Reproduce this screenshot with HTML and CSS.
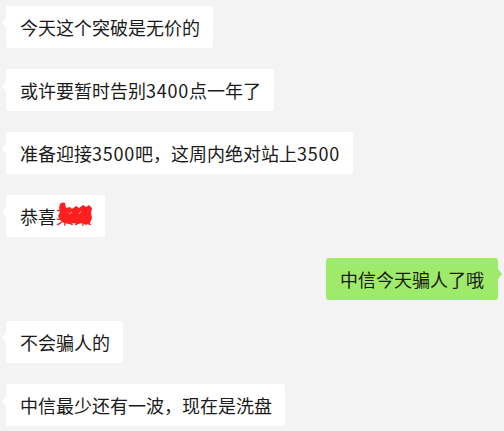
FILE: index.html
```html
<!DOCTYPE html>
<html lang="zh-CN">
<head>
<meta charset="utf-8">
<title>聊天</title>
<link rel="stylesheet" href="styles.css">
</head>
<body>
<div class="chat">
  <div class="row left"><div class="bubble">今天这个突破是无价的</div></div>
  <div class="row left"><div class="bubble">或许要暂时告别<span class="num">3400</span>点一年了</div></div>
  <div class="row left"><div class="bubble">准备迎接<span class="num">3500</span>吧，这周内绝对站上<span class="num">3500</span></div></div>
  <div class="row left"><div class="bubble">恭喜<span class="redact">某某<svg class="scribble" viewBox="0 0 36 24" width="36" height="24" aria-hidden="true"><path d="M3 2 Q5 -0.5 8 1 L9 6 L13 5 L15 7 L19 4 L22 6 L26 3 L29 5 L32 3 L35 6 L34 11 L35 16 L33 21 L29 23 L25 21 L21 22 L16 21 L12 22 L7 21 L3 18 L1 14 L3 10 L2 6 Z" fill="#ff1f1f"/><path d="M12 12 L15 10 M22 12 L24 9" stroke="#f7a0a0" stroke-width="1" fill="none"/></svg></span></div></div>
  <div class="row right"><div class="bubble">中信今天骗人了哦</div></div>
  <div class="row left"><div class="bubble">不会骗人的</div></div>
  <div class="row left"><div class="bubble">中信最少还有一波，现在是洗盘</div></div>
</div>
</body>
</html>
```
FILE: styles.css
```css
html, body {
  margin: 0;
  padding: 0;
  background: #f3f3f3;
}
body {
  font-family: "Noto Sans CJK SC", "Noto Sans", sans-serif;
  color: #1a1a1a;
}
.chat {
  display: flex;
  flex-direction: column;
  gap: 21px;
  padding: 6px 6px 0 6px;
}
.row {
  display: flex;
}
.row.right {
  justify-content: flex-end;
}
.bubble {
  position: relative;
  height: 42px;
  box-sizing: border-box;
  display: flex;
  align-items: center;
  padding: 0 13px 0 14px;
  font-size: 18px;
  line-height: 24px;
  background: #ffffff;
  border-radius: 3px;
  white-space: nowrap;
}
.num {
  letter-spacing: 0.75px;
}
.left .bubble::before {
  content: "";
  position: absolute;
  left: -4px;
  top: 12px;
  border-top: 5px solid transparent;
  border-bottom: 5px solid transparent;
  border-right: 4px solid #ffffff;
}
.right .bubble {
  background: #9eea6a;
  padding: 0 14px;
}
.right .bubble::after {
  content: "";
  position: absolute;
  right: -4px;
  top: 11px;
  border-top: 5px solid transparent;
  border-bottom: 5px solid transparent;
  border-left: 4px solid #9eea6a;
}
.redact {
  position: relative;
  display: inline-block;
  color: #ff1f1f;
}
.scribble {
  position: absolute;
  left: 1px;
  top: -2px;
}
```
